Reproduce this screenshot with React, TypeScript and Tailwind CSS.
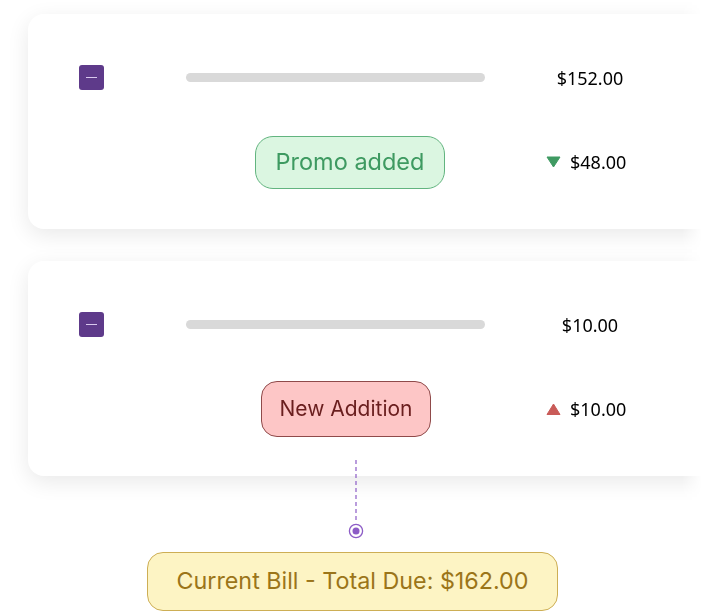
function Checkbox() {
  return (
    <div className="flex h-[25px] w-[25px] items-center justify-center rounded-[3px] bg-[#5e3a8a]">
      <div className="h-[1.5px] w-[11px] bg-[#d9c9ee]" />
    </div>
  );
}

function Amount({ children }: { children: React.ReactNode }) {
  return (
    <span className="font-['Noto_Sans',sans-serif] text-[18px] leading-none text-black">
      {children}
    </span>
  );
}

function BillCard({ total, pill }: { total: string; pill: React.ReactNode }) {
  return (
    // wrapper carries the fade so the card's shadow is not clipped by the mask
    <div className="-m-[30px] w-[780px] p-[30px] [mask-image:linear-gradient(to_right,black_684px,transparent_704px)]">
      <div className="w-[720px] rounded-2xl bg-white pt-[51px] pb-[39px] shadow-[0_6px_22px_rgba(0,0,0,0.09)]">
        <div className="flex h-[25px] items-center">
          <div className="ml-[51px]">
            <Checkbox />
          </div>
          <div className="ml-[82px] h-[9px] w-[299px] rounded-full bg-[#d9d9d9]" />
          <div className="ml-[45px] flex w-[120px] justify-center">
            <Amount>{total}</Amount>
          </div>
        </div>
        {pill}
      </div>
    </div>
  );
}

function Triangle({ up }: { up?: boolean }) {
  return (
    <svg width="15" height="12" viewBox="0 0 15 12" aria-hidden="true">
      {up ? (
        <path d="M7.5 1 L14 11.5 H1 Z" fill="#c95b58" strokeLinejoin="round" stroke="#c95b58" strokeWidth="1" />
      ) : (
        <path d="M1 1 H14 L7.5 11 Z" fill="#3f9a62" strokeLinejoin="round" stroke="#3f9a62" strokeWidth="1" />
      )}
    </svg>
  );
}

export default function App() {
  return (
    <div className="h-[614px] w-[705px] overflow-hidden bg-white pt-[14px] pl-[28px]">
      <BillCard
        total="$152.00"
        pill={
          <div className="mt-[44px] flex h-[56px] items-center">
            <div className="ml-[227px] flex h-[53px] w-[190px] items-center justify-center rounded-[18px] border border-[#62b47f] bg-[#dbf6e1] font-['Inter',sans-serif] text-[23.5px] text-[#3e9a61]">
              Promo added
            </div>
            <div className="ml-[101px] flex items-center gap-[9px]">
              <Triangle />
              <Amount>$48.00</Amount>
            </div>
          </div>
        }
      />
      <div className="h-[32px]" />
      <BillCard
        total="$10.00"
        pill={
          <div className="mt-[44px] flex h-[56px] items-center">
            <div className="ml-[233px] flex h-[56px] w-[170px] items-center justify-center rounded-[16px] border border-[#8f4a4a] bg-[#fdc6c6] font-['Inter',sans-serif] text-[21px] text-[#6a1e1e]">
              New Addition
            </div>
            <div className="ml-[115px] flex items-center gap-[9px]">
              <Triangle up />
              <Amount>$10.00</Amount>
            </div>
          </div>
        }
      />
      {/* connector */}
      <div className="relative -ml-[28px] flex w-[705px] flex-col items-center">
        <div className="-mt-[16px] ml-[7px] flex flex-col items-center">
          <svg width="4" height="60" aria-hidden="true">
            <line x1="2" y1="0" x2="2" y2="60" stroke="#8c5cc6" strokeWidth="1.2" strokeDasharray="4 3" />
          </svg>
          <svg width="16" height="16" viewBox="0 0 16 16" className="mt-[3px]" aria-hidden="true">
            <circle cx="8" cy="8" r="6.6" fill="white" stroke="#8c5cc6" strokeWidth="1.3" />
            <circle cx="8" cy="8" r="3.5" fill="#8c5cc6" />
          </svg>
        </div>
        <div className="mt-[13px] flex h-[59px] w-[411px] items-center justify-center rounded-[16px] border border-[#cdae55] bg-[#fdf4c4] font-['Inter',sans-serif] text-[23.3px] text-[#9b7519]">
          Current Bill - Total Due: $162.00
        </div>
      </div>
    </div>
  );
}
